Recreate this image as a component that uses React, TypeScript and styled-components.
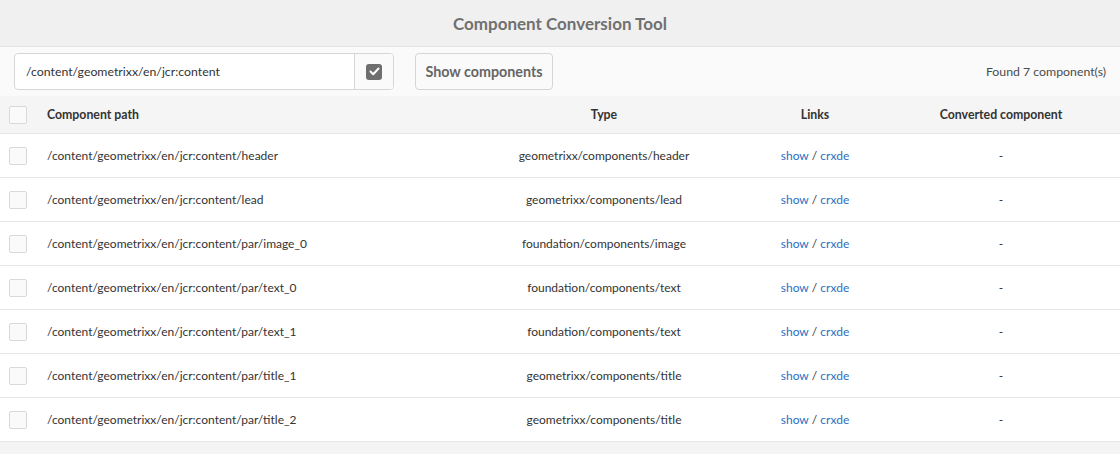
import React from "react";
import styled, { createGlobalStyle } from "styled-components";

const Global = createGlobalStyle`
  html, body { margin: 0; padding: 0; background: #f4f4f4; }
  body { font-family: Lato, "Open Sans", sans-serif; color: #4b4b4b; }
  * { box-sizing: border-box; }
`;

const Page = styled.div`
  width: 1120px;
  min-height: 454px;
  background: #f4f4f4;
`;

const Header = styled.header`
  height: 47px;
  display: flex;
  align-items: center;
  justify-content: center;
  background: #f0f0f0;
  border-bottom: 1px solid #e3e3e3;
`;

const Title = styled.h1`
  margin: 0;
  font-size: 17px;
  font-weight: 700;
  color: #707070;
`;

const Toolbar = styled.div`
  height: 49px;
  display: flex;
  align-items: center;
  padding: 0 14px;
  background: #fafafa;
`;

const InputGroup = styled.div`
  display: flex;
  height: 37px;
  width: 380px;
  border: 1px solid #d6d6d6;
  border-radius: 4px;
  background: #fff;
  overflow: hidden;
`;

const PathInput = styled.div`
  flex: 1;
  display: flex;
  align-items: center;
  padding: 0 11px;
  font-size: 12.3px;
  color: #333;
  border-right: 1px solid #d6d6d6;
`;

const CheckCell = styled.div`
  width: 38px;
  display: flex;
  align-items: center;
  justify-content: center;
  background: #fafafa;
`;

const CheckedBox = styled.div`
  width: 16px;
  height: 16px;
  border-radius: 3px;
  background: #6e6e6e;
  display: flex;
  align-items: center;
  justify-content: center;
`;

const Button = styled.button`
  margin-left: 21px;
  height: 37px;
  width: 138px;
  padding: 0;
  border: 1px solid #d6d6d6;
  border-radius: 4px;
  background: #fafafa;
  font-family: inherit;
  font-size: 14.3px;
  font-weight: 700;
  color: #666;
`;

const Found = styled.div`
  margin-left: auto;
  font-size: 12.3px;
  color: #4b4b4b;
`;

const Table = styled.div`
  display: grid;
  grid-template-columns: 47px 413px 288px 134px 238px;
`;

const HeadRow = styled.div`
  display: contents;
  & > div {
    height: 38px;
    background: #f5f5f5;
    border-bottom: 1px solid #e6e6e6;
    font-weight: 700;
    font-size: 12.3px;
    color: #333;
  }
`;

const Row = styled.div`
  display: contents;
  & > div {
    height: 44px;
    background: #fff;
    border-bottom: 1px solid #e6e6e6;
  }
`;

const Cell = styled.div<{ $align?: "left" | "center" }>`
  display: flex;
  align-items: center;
  justify-content: ${(p) => (p.$align === "center" ? "center" : "flex-start")};
  font-size: 12px;
  color: #333;
  white-space: pre;
`;

const BoxCell = styled.div`
  display: flex;
  align-items: center;
  padding-left: 9px;
`;

const Box = styled.div`
  width: 18px;
  height: 18px;
  border: 1px solid #d9d9d9;
  border-radius: 2px;
  background: #fafafa;
`;

const Link = styled.a`
  color: #2b6fc4;
  text-decoration: none;
`;

const rows = [
  ["/content/geometrixx/en/jcr:content/header", "geometrixx/components/header"],
  ["/content/geometrixx/en/jcr:content/lead", "geometrixx/components/lead"],
  ["/content/geometrixx/en/jcr:content/par/image_0", "foundation/components/image"],
  ["/content/geometrixx/en/jcr:content/par/text_0", "foundation/components/text"],
  ["/content/geometrixx/en/jcr:content/par/text_1", "foundation/components/text"],
  ["/content/geometrixx/en/jcr:content/par/title_1", "geometrixx/components/title"],
  ["/content/geometrixx/en/jcr:content/par/title_2", "geometrixx/components/title"],
];

export default function App() {
  return (
    <Page>
      <Global />
      <Header>
        <Title>Component Conversion Tool</Title>
      </Header>
      <Toolbar>
        <InputGroup>
          <PathInput>/content/geometrixx/en/jcr:content</PathInput>
          <CheckCell>
            <CheckedBox>
              <svg width="11" height="9" viewBox="0 0 11 9">
                <path d="M1.5 4.5 L4.2 7.2 L9.5 1.5" fill="none" stroke="#fff" strokeWidth="2" strokeLinecap="round" strokeLinejoin="round" />
              </svg>
            </CheckedBox>
          </CheckCell>
        </InputGroup>
        <Button>Show components</Button>
        <Found>Found 7 component(s)</Found>
      </Toolbar>
      <Table>
        <HeadRow>
          <BoxCell><Box /></BoxCell>
          <Cell>Component path</Cell>
          <Cell $align="center">Type</Cell>
          <Cell $align="center">Links</Cell>
          <Cell $align="center">Converted component</Cell>
        </HeadRow>
        {rows.map(([path, type]) => (
          <Row key={path}>
            <BoxCell><Box /></BoxCell>
            <Cell>{path}</Cell>
            <Cell $align="center">{type}</Cell>
            <Cell $align="center">
              <Link>show</Link>
              {" / "}
              <Link>crxde</Link>
            </Cell>
            <Cell $align="center">-</Cell>
          </Row>
        ))}
      </Table>
    </Page>
  );
}
